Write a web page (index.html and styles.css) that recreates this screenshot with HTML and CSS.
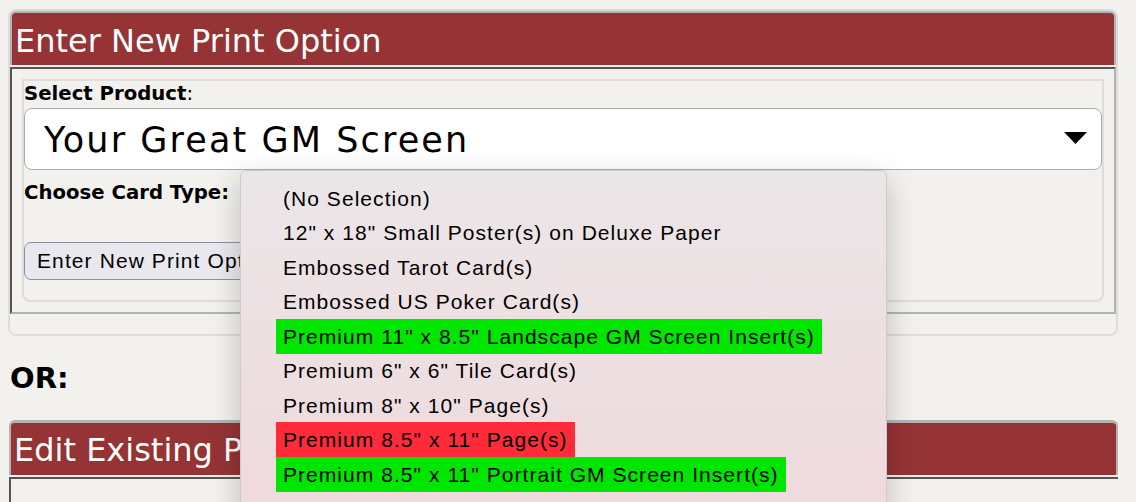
FILE: index.html
```html
<!DOCTYPE html>
<html>
<head>
<meta charset="utf-8">
<link rel="stylesheet" href="styles.css">
</head>
<body>
<div class="page">
  <div class="panel">
    <div class="box">
      <div class="head">Enter New Print Option</div>
      <div class="body">
        <div class="fs">
          <div class="label"><b>Select Product</b>:</div>
          <div class="select">
            <span class="select-text">Your Great GM Screen</span>
            <svg class="arrow" width="23" height="12" viewBox="0 0 23 12"><polygon points="0,0 23,0 11.5,12" fill="#000"/></svg>
          </div>
          <div class="label label-card"><b>Choose Card Type:</b></div>
          <button class="btn">Enter New Print Option</button>
        </div>
      </div>
    </div>
  </div>
  <div class="or">OR:</div>
  <div class="box box-edit">
    <div class="head">Edit Existing Print Option</div>
    <div class="body body-edit"></div>
  </div>
</div>
<div class="popup">
  <div class="opt"><span>(No Selection)</span></div>
  <div class="opt"><span>12" x 18" Small Poster(s) on Deluxe Paper</span></div>
  <div class="opt"><span>Embossed Tarot Card(s)</span></div>
  <div class="opt"><span>Embossed US Poker Card(s)</span></div>
  <div class="opt"><span class="green">Premium 11" x 8.5" Landscape GM Screen Insert(s)</span></div>
  <div class="opt"><span>Premium 6" x 6" Tile Card(s)</span></div>
  <div class="opt"><span>Premium 8" x 10" Page(s)</span></div>
  <div class="opt"><span class="red">Premium 8.5" x 11" Page(s)</span></div>
  <div class="opt"><span class="green">Premium 8.5" x 11" Portrait GM Screen Insert(s)</span></div>
</div>
</body>
</html>
```

FILE: styles.css
```css
html, body {
  margin: 0;
  padding: 0;
  background: #f2f1ee;
  overflow: hidden;
  height: 502px;
}
body {
  font-family: "DejaVu Sans", sans-serif;
  color: #000;
  position: relative;
}
.page {
  padding: 9px 18px 0 8px;
}
.panel {
  border: 2px solid #dedddb;
  border-radius: 8px;
  padding: 0 0 20px 0;
}
.head {
  background: #953335;
  color: #fff;
  font-family: "DejaVu Sans", sans-serif;
  font-size: 32px;
  line-height: 52px;
  height: 50px;
  padding: 2px 0 0 3px;
  border: 2px solid #b3b3b3;
  border-bottom: 0;
  border-radius: 6px 6px 0 0;
  white-space: nowrap;
  overflow: hidden;
}
.body {
  margin-top: 2px;
  border: 2px solid #b3b3b3;
  border-top-color: #555;
  border-left-color: #555;
  padding: 10px 10px 10px 10px;
}
.fs {
  border: 2px solid #dedddb;
  border-radius: 0 0 8px 8px;
  padding: 1px 0 20px 0;
}
.label {
  font-size: 19.7px;
  line-height: 24px;
  height: 24px;
}
.select {
  margin-top: 2px;
  height: 60px;
  background: #fff;
  border: 1px solid #acacac;
  border-radius: 8px;
  display: flex;
  align-items: center;
  justify-content: space-between;
  padding: 0 14px 0 19px;
}
.select-text {
  font-family: "DejaVu Sans", sans-serif;
  font-size: 35px;
  letter-spacing: 2.1px;
  margin-top: 2px;
}
.arrow {
  display: block;
  margin-bottom: 2px;
}
.label-card {
  margin-top: 11px;
}
.btn {
  display: block;
  margin-top: 37px;
  height: 38px;
  width: 300px;
  text-align: left;
  background: #e9e8ee;
  border: 1px solid #8f8e9c;
  border-radius: 7px;
  padding: 0 0 0 12px;
  font-family: "Liberation Sans", Arial, sans-serif;
  font-size: 21px;
  letter-spacing: 1.1px;
  color: #000;
}
.or {
  font-size: 29px;
  font-weight: bold;
  line-height: 34px;
  margin: 25px 0 25px 2px;
}
.box-edit {
  margin-left: 1px;
}
.box-edit .head {
  border-top-width: 3px;
  height: 51px;
  padding-top: 1px;
}
.body-edit {
  height: 40px;
  border-right: 0;
  border-bottom: 0;
}
.popup {
  position: absolute;
  left: 240px;
  top: 170px;
  width: 647px;
  height: 360px;
  border: 1px solid #cfcbcc;
  border-radius: 6px;
  background: linear-gradient(#ebe6e8, #efd9dc);
  box-shadow: 0 10px 30px rgba(0, 0, 0, 0.22);
  padding-top: 9.5px;
  box-sizing: border-box;
}
.opt {
  height: 34.5px;
  padding-left: 35px;
  font-family: "Liberation Sans", Arial, sans-serif;
  font-size: 21px;
  letter-spacing: 1.05px;
}
.opt span {
  display: inline-block;
  line-height: 35px;
  padding: 0 7px;
  white-space: nowrap;
}
.opt .green {
  background: #00e600;
}
.opt .red {
  background: #ff2a3a;
}
```
